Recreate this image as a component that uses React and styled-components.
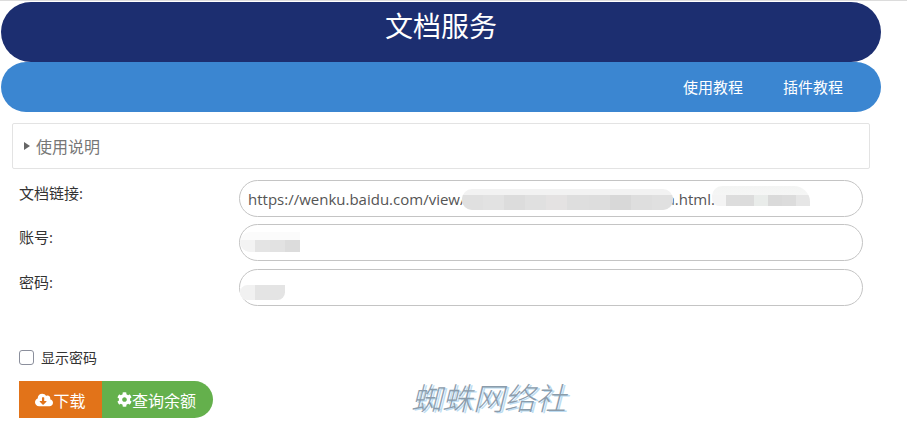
import React from 'react';
import styled, { createGlobalStyle } from 'styled-components';
import { FaCloudDownloadAlt, FaCog } from 'react-icons/fa';

const Global = createGlobalStyle`
  html, body { margin: 0; padding: 0; background: #fff; }
  body {
    font-family: "Open Sans", "Noto Sans CJK SC", sans-serif;
    color: #333;
    overflow: hidden;
  }
`;

const Page = styled.div`
  position: relative;
  width: 907px;
  height: 445px;
  box-sizing: border-box;
  border-top: 1px solid #dcdcdc;
  padding: 1px 26px 0 1px;
`;

const Header = styled.header`
  height: 60px;
  border-radius: 30px;
  background: #1c2e70;
  color: #fff;
  display: flex;
  justify-content: center;
`;

const Title = styled.h1`
  margin: 4px 0 0;
  font-size: 28px;
  font-weight: 400;
  line-height: 40px;
`;

const Nav = styled.nav`
  height: 50px;
  border-radius: 25px;
  background: #3b86d1;
  display: flex;
  justify-content: flex-end;
  align-items: center;
  gap: 40px;
  padding-right: 38px;
`;

const NavLink = styled.a`
  color: #fff;
  font-size: 15px;
  line-height: 50px;
`;

const Content = styled.main`
  padding: 11px 11px 0 11px;
`;

const Panel = styled.details`
  box-sizing: border-box;
  width: 858px;
  height: 46px;
  border: 1px solid #e3e3e3;
  border-radius: 2px;
`;

const Summary = styled.summary`
  list-style: none;
  display: flex;
  align-items: center;
  gap: 6px;
  height: 44px;
  padding-left: 11px;
  color: #777;
  font-size: 16px;
  &::-webkit-details-marker { display: none; }
  &::before {
    content: "";
    border-left: 6px solid #666;
    border-top: 4.5px solid transparent;
    border-bottom: 4.5px solid transparent;
  }
`;

const Form = styled.form`
  display: flex;
  flex-direction: column;
  gap: 7.4px;
  margin-top: 11px;
  padding-left: 7px;
`;

const Row = styled.div`
  display: grid;
  grid-template-columns: 220px 624px;
  height: 37px;
`;

const Label = styled.label`
  font-size: 15px;
  line-height: 26px;
  color: #333;
`;

const Field = styled.div`
  position: relative;
`;

const Input = styled.input`
  box-sizing: border-box;
  width: 100%;
  height: 37px;
  border: 1px solid #c4c4c4;
  border-radius: 19px;
  padding: 0 8px;
  font: 15px "Open Sans", "Noto Sans CJK SC", sans-serif;
  color: #555;
  outline: none;
  background: #fff;
`;

const Mask = styled.span`
  position: absolute;
  left: ${p => p.$x}px;
  top: ${p => p.$y}px;
  width: ${p => p.$w}px;
  height: ${p => p.$h}px;
  display: flex;
  align-items: flex-end;
  overflow: hidden;
  background: ${p => p.$bg};
  border-radius: ${p => p.$radius};
`;

const Tile = styled.i`
  flex: 1;
  height: ${p => p.$h}px;
  background: ${p => p.$c};
`;

const tiles = (colors, h) => colors.map((c, i) => <Tile key={i} $c={c} $h={h} />);

const ShowRow = styled.label`
  display: flex;
  align-items: center;
  gap: 7px;
  margin: 43px 0 0 7px;
  height: 18px;
  font-size: 14px;
  line-height: 18px;
  color: #333;
`;

const Check = styled.input`
  appearance: none;
  box-sizing: border-box;
  width: 15px;
  height: 15px;
  margin: 0;
  border: 1.5px solid #8b8f9c;
  border-radius: 3px;
  background: #fff;
`;

const Buttons = styled.div`
  display: flex;
  margin: 14.4px 0 0 7px;
`;

const Btn = styled.button`
  display: flex;
  align-items: center;
  justify-content: center;
  box-sizing: border-box;
  height: 37px;
  width: ${p => p.$w}px;
  border: 0;
  padding: 0 ${p => p.$pr}px 0 0;
  color: #fff;
  background: ${p => p.$bg};
  border-radius: ${p => p.$radius};
  font: 16px "Open Sans", "Noto Sans CJK SC", sans-serif;
  svg { flex: none; }
`;

const Watermark = styled.div`
  position: absolute;
  left: 411px;
  top: 376px;
  font-family: "Noto Sans CJK SC", sans-serif;
  font-weight: 300;
  font-style: italic;
  font-size: 31px;
  line-height: 40px;
  color: #8b9cab;
  text-shadow: 2px 1px 0 #bcdcf2;
  white-space: nowrap;
`;

export default function App() {
  return (
    <>
      <Global />
      <Page>
        <Header><Title>文档服务</Title></Header>
        <Nav>
          <NavLink>使用教程</NavLink>
          <NavLink>插件教程</NavLink>
        </Nav>
        <Content>
          <Panel>
            <Summary>使用说明</Summary>
          </Panel>
          <Form>
            <Row>
              <Label>文档链接:</Label>
              <Field>
                <Input readOnly value="https://wenku.baidu.com/view/00000000000000000000000la.html." />
                <Mask $x={223} $y={9} $w={211} $h={21} $bg="#f2f2f2" $radius="10px">
                  {tiles(['#e0e0e0', '#e2e2e2', '#dcdcdc', '#e0e0e0', '#e4e2e2', '#dedede', '#dddddd', '#d8d8d8', '#dedede', '#e0e0e0'], 15)}
                </Mask>
                <Mask $x={473} $y={6} $w={98} $h={20} $bg="linear-gradient(#f3f4f3, #f8f8f8)" $radius="10px 16px 0 8px">
                  {tiles(['#f4f4f4', '#dddddd', '#dcdcdc', '#e9ecea', '#dadada', '#dcdcdc', '#e6e6e6'], 11)}
                </Mask>
              </Field>
            </Row>
            <Row>
              <Label>账号:</Label>
              <Field>
                <Input readOnly />
                <Mask $x={1} $y={8} $w={60} $h={20} $bg="#fbfbfb" $radius="10px 0 0 10px">
                  {tiles(['#f3f3f3', '#e4e4e4', '#e2e2e2', '#dcdcdc'], 12)}
                </Mask>
              </Field>
            </Row>
            <Row>
              <Label>密码:</Label>
              <Field>
                <Input readOnly />
                <Mask $x={1} $y={16} $w={45} $h={15} $bg="#fff" $radius="10px 0 10px 10px">
                  {tiles(['#f1f1f1', '#e4e4e4', '#e4e4e4'], 15)}
                </Mask>
              </Field>
            </Row>
          </Form>
          <ShowRow><Check type="checkbox" />显示密码</ShowRow>
          <Buttons>
            <Btn type="button" $w={83} $pr={0} $bg="#e27319" $radius="0">
              <FaCloudDownloadAlt size={18} />下载
            </Btn>
            <Btn type="button" $w={111} $pr={2} $bg="#64b04c" $radius="0 19px 19px 0">
              <FaCog size={15} />查询余额
            </Btn>
          </Buttons>
        </Content>
        <Watermark>蜘蛛网络社</Watermark>
      </Page>
    </>
  );
}
